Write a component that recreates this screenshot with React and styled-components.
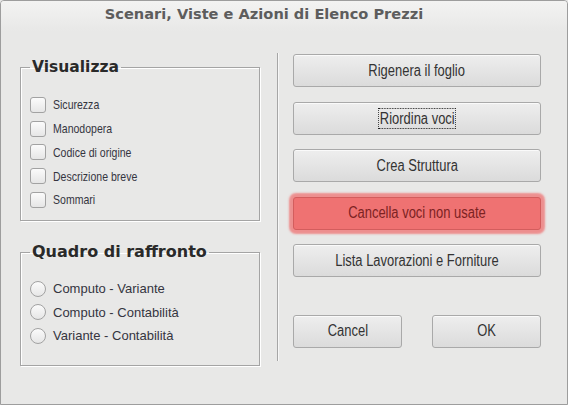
import React from 'react';
import styled, { createGlobalStyle, css } from 'styled-components';

const GlobalStyle = createGlobalStyle`
    html, body {
        margin: 0;
        padding: 0;
        background: #e8e8e7;
    }
    * {
        box-sizing: border-box;
    }
`

// no narrow face installed, so squeeze regular Liberation Sans
const Narrow = styled.span`
    display: inline-block;
    white-space: nowrap;
    transform: scaleX(0.81);
    transform-origin: ${p => p.$origin || 'center'};
`

const Window = styled.div`
    width: 568px;
    height: 405px;
    border: 1px solid #9d9d9d;
    border-radius: 4px 4px 0 0;
    background: #e8e8e7;
    display: flex;
    flex-direction: column;
    overflow: hidden;
`

const TitleBar = styled.div`
    height: 30px;
    display: flex;
    justify-content: center;
    padding: 4px 40px 0 0;
    background: linear-gradient(#f3f3f2, #e8e8e7);
    font-family: "DejaVu Sans", sans-serif;
    font-weight: bold;
    font-size: 14.6px;
    color: #5d5d5d;
`

const Body = styled.div`
    display: flex;
    padding: 22px 0 0 19px;
`

const LeftColumn = styled.div`
    width: 240px;
    padding-top: 5px;
    display: flex;
    flex-direction: column;
    gap: 22px;
`

const Group = styled.fieldset`
    margin: 0;
    border: 1px solid #a4a4a4;
    box-shadow: 1px 1px 0 #ffffff, inset 1px 1px 0 #ffffff;
    padding: ${p => p.$top}px 9px 0 9px;
    height: ${p => p.$height}px;
    display: flex;
    flex-direction: column;
`

const Legend = styled.legend`
    margin-left: 0;
    padding: 0 2px;
    font-family: "DejaVu Sans", sans-serif;
    font-weight: bold;
    font-size: ${p => p.$size}px;
    line-height: 18px;
    color: #2a2a2a;
`

const Option = styled.label`
    display: flex;
    align-items: center;
    gap: 7px;
    height: ${p => p.$pitch}px;
    font-family: "Liberation Sans", Arial, sans-serif;
    font-size: 13px;
    color: #35353f;
`

const Box = styled.span`
    width: 16px;
    height: 16px;
    flex: none;
    border: 1px solid #a2a2a2;
    border-radius: ${p => (p.$round ? '50%' : '3px')};
    background: linear-gradient(#fbfbfb, #e6e6e6);
`

const Separator = styled.div`
    width: 1px;
    height: 308px;
    margin: 0 15px 0 17px;
    background: #a6a6a6;
    box-shadow: 1px 0 0 #f7f7f7;
`

const RightColumn = styled.div`
    width: 248px;
    padding-top: 1px;
    display: flex;
    flex-direction: column;
    gap: 14.5px;
`

const Button = styled.button`
    height: 33px;
    width: ${p => p.$width || '100%'};
    border: 1px solid #a9a9a9;
    border-radius: 3px;
    background: linear-gradient(#eeeeee, #dbdbdb);
    box-shadow: inset 0 1px 0 #fafafa;
    font-family: "Liberation Sans", Arial, sans-serif;
    font-size: 16px;
    color: #333333;
    display: flex;
    align-items: center;
    justify-content: center;
    padding: 0;

    ${p => p.$danger && css`
        background: #ef7272;
        border-color: #d35d5d;
        box-shadow: 0 0 2px 4px rgba(239, 114, 114, 0.75);
        color: #7c2222;
    `}
`

const Focus = styled(Narrow)`
    outline: 1px dotted #222;
    padding: 0 1px;
    line-height: 19px;
`

const Footer = styled.div`
    margin-top: 23px;
    display: flex;
    justify-content: space-between;
`

function App() {
    const views = ['Sicurezza', 'Manodopera', 'Codice di origine', 'Descrizione breve', 'Sommari'];
    const compare = ['Computo - Variante', 'Computo - Contabilità', 'Variante - Contabilità'];

    return (
        <>
            <GlobalStyle />
            <Window>
                <TitleBar>Scenari, Viste e Azioni di Elenco Prezzi</TitleBar>
                <Body>
                    <LeftColumn>
                        <Group $height={163} $top={17}>
                            <Legend $size={15.5}>Visualizza</Legend>
                            {views.map(v => (
                                <Option key={v} $pitch={23.75}>
                                    <Box />
                                    <Narrow $origin="left">{v}</Narrow>
                                </Option>
                            ))}
                        </Group>
                        <Group $height={123} $top={16}>
                            <Legend $size={16}>Quadro di raffronto</Legend>
                            {compare.map(v => (
                                <Option key={v} $pitch={23.5}>
                                    <Box $round />
                                    {v}
                                </Option>
                            ))}
                        </Group>
                    </LeftColumn>
                    <Separator />
                    <RightColumn>
                        <Button><Narrow>Rigenera il foglio</Narrow></Button>
                        <Button><Focus>Riordina voci</Focus></Button>
                        <Button><Narrow>Crea Struttura</Narrow></Button>
                        <Button $danger><Narrow>Cancella voci non usate</Narrow></Button>
                        <Button><Narrow>Lista Lavorazioni e Forniture</Narrow></Button>
                        <Footer>
                            <Button $width="109px"><Narrow>Cancel</Narrow></Button>
                            <Button $width="109px"><Narrow>OK</Narrow></Button>
                        </Footer>
                    </RightColumn>
                </Body>
            </Window>
        </>
    );
}

export default App
